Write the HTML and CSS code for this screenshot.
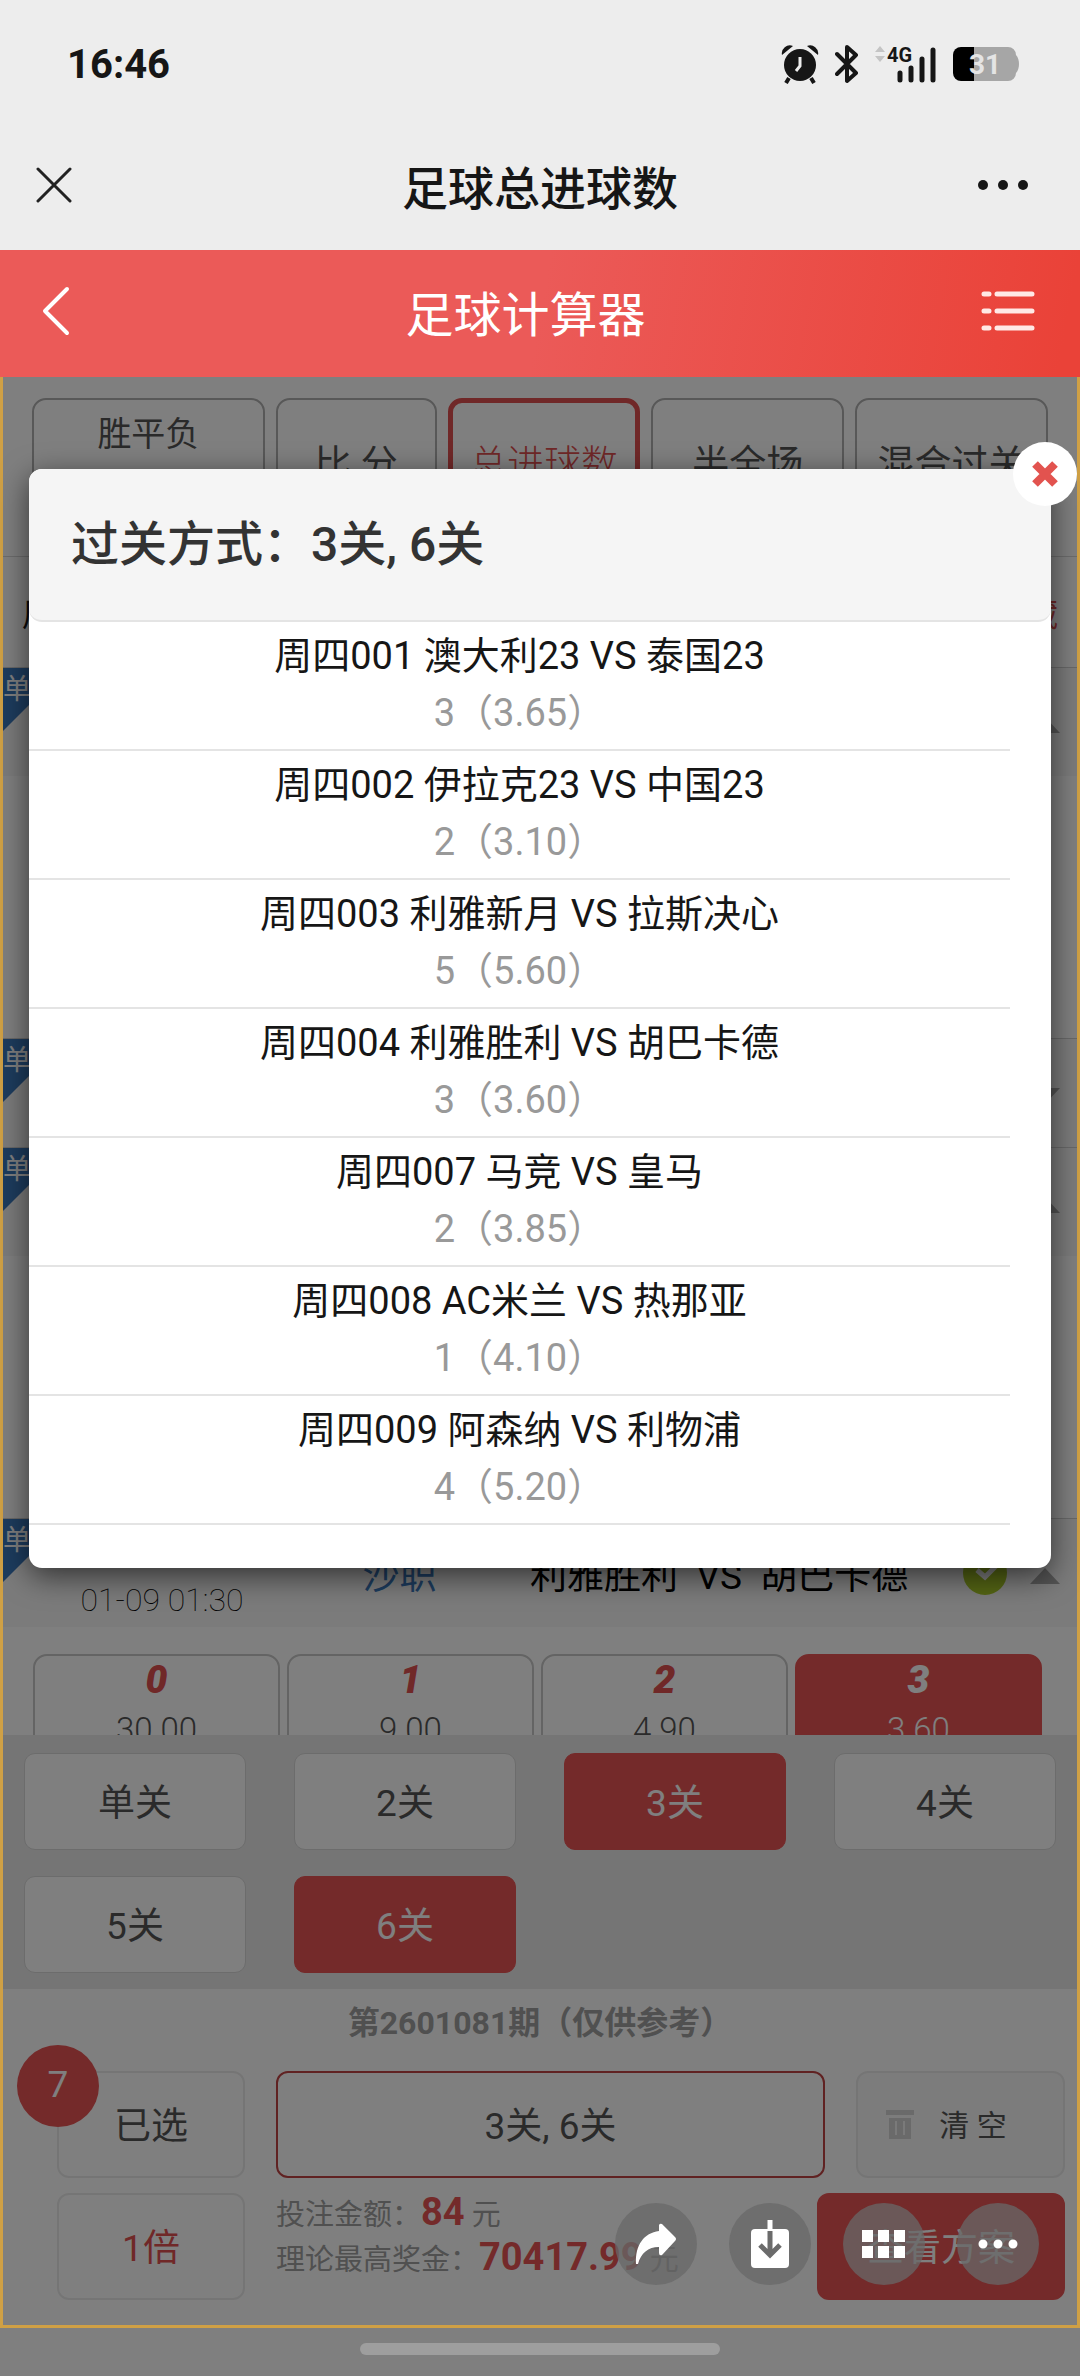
FILE: index.html
```html
<!DOCTYPE html>
<html lang="zh-CN">

<head>
    <meta charset="UTF-8">
    <meta name="viewport" content="width=device-width, initial-scale=1.0">
    <title>足球总进球数</title>
    <link rel="stylesheet" href="styles.css">
</head>

<body>
    <div class="status-bar">
        <span class="time">16:46</span>
        <div class="status-icons">
            <svg width="38" height="40" viewBox="0 0 38 40">
                <path d="M1 11a8 8 0 0 1 11-9zM37 11a8 8 0 0 0-11-9z" fill="#161616"/>
                <path d="M8 34l-3 5M30 34l3 5" stroke="#161616" stroke-width="4"/>
                <circle cx="19" cy="21" r="16" fill="#161616"/>
                <path d="M19 13v9l-4 5" fill="none" stroke="#ededed" stroke-width="3"/>
            </svg>
            <svg width="24" height="40" viewBox="0 0 24 40">
                <path d="M2 10l19 19-9 8V3l9 8L2 30" fill="none" stroke="#161616" stroke-width="4" stroke-linejoin="round" stroke-linecap="round"/>
            </svg>
            <svg width="62" height="40" viewBox="0 0 62 40">
                <path d="M0 8l5-6 5 6zM0 12l5 6 5-6z" fill="#c4c4c4"/>
                <text x="12" y="18" class="net">4G</text>
                <path d="M25 29v7M36 24v12M47 15v21M58 6v30" stroke="#161616" stroke-width="5" stroke-linecap="round"/>
            </svg>
            <svg width="67" height="40" viewBox="0 0 67 40">
                <path d="M21 3h34a8 8 0 0 1 8 8c4 4 4 14 0 18a8 8 0 0 1-8 8H21z" fill="#a6a6a6"/>
                <path d="M21 3H8a8 8 0 0 0-8 8v18a8 8 0 0 0 8 8h13z" fill="#000"/>
                <text x="32" y="30" text-anchor="middle" class="charge">31</text>
            </svg>
        </div>
    </div>

    <div class="nav-bar">
        <button class="icon-button" aria-label="关闭">
            <svg width="36" height="38" viewBox="0 0 36 38">
                <path d="M2 3l32 32M34 3L2 35" stroke="#222" stroke-width="3" stroke-linecap="round"/>
            </svg>
        </button>
        <h1>足球总进球数</h1>
        <button class="icon-button" aria-label="更多">
            <svg width="50" height="10" viewBox="0 0 50 10">
                <circle cx="5" cy="5" r="5" fill="#161616"/>
                <circle cx="25" cy="5" r="5" fill="#161616"/>
                <circle cx="45" cy="5" r="5" fill="#161616"/>
            </svg>
        </button>
    </div>

    <header class="header">
        <button class="icon-button" aria-label="返回">
            <svg width="28" height="50" viewBox="0 0 28 50">
                <path d="M25 3L3 25l22 22" fill="none" stroke="#fff" stroke-width="4" stroke-linecap="round" stroke-linejoin="round"/>
            </svg>
        </button>
        <h2>足球计算器</h2>
        <button class="icon-button" aria-label="菜单">
            <svg width="54" height="42" viewBox="0 0 54 42">
                <path d="M3 4h5M16 4h35M3 21h5M16 21h35M3 38h5M16 38h35" stroke="#ffe9e6" stroke-width="5" stroke-linecap="round"/>
            </svg>
        </button>
    </header>

    <main class="calculator">
        <div class="bets">
            <div class="tabs">
                <button class="tab tab-top">胜平负</button>
                <button class="tab">比 分</button>
                <button class="tab active">总进球数</button>
                <button class="tab">半全场</button>
                <button class="tab">混合过关</button>
            </div>

            <div class="day">
                <span>周四</span>
                <button class="hide">隐藏</button>
            </div>

            <div class="match">
                <span class="single">单</span>
                <svg class="arrow" width="30" height="16"><path d="M15 0l15 16H0z"/></svg>
            </div>
            <div class="options"></div>

            <div class="match">
                <span class="single">单</span>
                <svg class="arrow" width="30" height="16"><path d="M0 0h30L15 16z"/></svg>
            </div>

            <div class="match">
                <span class="single">单</span>
                <svg class="arrow" width="30" height="16"><path d="M15 0l15 16H0z"/></svg>
            </div>
            <div class="options"></div>

            <div class="match">
                <span class="single">单</span>
                <div class="match-time">周四004<br>01-09 01:30</div>
                <div class="league">沙职</div>
                <div class="teams">利雅胜利 &nbsp;VS&nbsp; 胡巴卡德</div>
                <svg class="check" width="44" height="44" viewBox="0 0 44 44">
                    <circle cx="22" cy="22" r="22" fill="#a8c828"/>
                    <path d="M14 19l8 7 12-12" fill="none" stroke="#fff" stroke-width="5"/>
                </svg>
                <svg class="arrow" width="30" height="16"><path d="M15 0l15 16H0z"/></svg>
            </div>
            <div class="options">
                <button class="option"><b>0</b>30.00</button>
                <button class="option"><b>1</b>9.00</button>
                <button class="option"><b>2</b>4.90</button>
                <button class="option active"><b>3</b>3.60</button>
            </div>
        </div>

        <div class="passes">
            <button class="pass">单关</button>
            <button class="pass">2关</button>
            <button class="pass active">3关</button>
            <button class="pass">4关</button>
            <button class="pass">5关</button>
            <button class="pass active">6关</button>
        </div>

        <div class="summary">
            <p class="issue">第2601081期（仅供参考）</p>
            <div class="summary-row">
                <button class="box selected">已选<span class="count">7</span></button>
                <button class="box chosen">3关, 6关</button>
                <button class="box clear">
                    <svg width="28" height="32" viewBox="0 0 28 32">
                        <path d="M0 3h28v5H0zM3 11h22v21H3z" fill="#d4d4d4"/>
                        <path d="M10 14v14M18 14v14" stroke="#f4f4f4" stroke-width="2"/>
                    </svg>
                    清 空
                </button>
            </div>
            <div class="summary-row">
                <button class="box times">1倍</button>
                <div class="money">
                    <p>投注金额：<b>84</b> 元</p>
                    <p>理论最高奖金：<b>70417.99</b> 元</p>
                </div>
                <button class="box plan">查看方案</button>
            </div>
        </div>

        <div class="mask"></div>
        <div class="frame"></div>

        <section class="modal">
            <h3>过关方式：3关, 6关</h3>
            <button class="modal-close" aria-label="关闭">
                <svg width="28" height="28" viewBox="0 0 28 28">
                    <path d="M4 4l20 20M24 4L4 24" stroke="#e2534f" stroke-width="8"/>
                </svg>
            </button>
            <ul class="picks">
                <li>周四001 澳大利23 VS 泰国23<span>3（3.65）</span></li>
                <li>周四002 伊拉克23 VS 中国23<span>2（3.10）</span></li>
                <li>周四003 利雅新月 VS 拉斯决心<span>5（5.60）</span></li>
                <li>周四004 利雅胜利 VS 胡巴卡德<span>3（3.60）</span></li>
                <li>周四007 马竞 VS 皇马<span>2（3.85）</span></li>
                <li>周四008 AC米兰 VS 热那亚<span>1（4.10）</span></li>
                <li>周四009 阿森纳 VS 利物浦<span>4（5.20）</span></li>
            </ul>
        </section>

        <div class="tools">
            <button class="tool" aria-label="分享">
                <svg width="42" height="42" viewBox="0 0 42 42">
                    <path d="M24 2q1-2 3-1l13 13q2 2 0 4L27 32q-3 1-3-2v-6C13 24 6 30 3 41H1C0 22 9 10 24 8z" fill="#fff"/>
                </svg>
            </button>
            <button class="tool" aria-label="下载">
                <svg width="40" height="48" viewBox="0 0 40 48">
                    <rect x="1" y="9" width="38" height="39" rx="4" fill="#fff"/>
                    <path d="M20 0v10" stroke="#fff" stroke-width="5"/>
                    <path d="M20 11v23M10 25l10 10 10-10" fill="none" stroke="#6b6b6b" stroke-width="5"/>
                </svg>
            </button>
            <button class="tool" aria-label="应用">
                <svg width="44" height="28" viewBox="0 0 44 28">
                    <path d="M0 0h11v12H0zM16 0h11v12H16zM32 0h11v12H32zM0 16h11v12H0zM16 16h11v12H16zM32 16h11v12H32z" fill="#fff"/>
                </svg>
            </button>
            <button class="tool" aria-label="更多">
                <svg width="40" height="10" viewBox="0 0 40 10">
                    <path d="M5 5h0M20 5h0M35 5h0" stroke="#fff" stroke-width="9" stroke-linecap="round"/>
                </svg>
            </button>
        </div>
    </main>

    <div class="home-bar"><span></span></div>
</body>

</html>
```
FILE: styles.css
```css
* {
    box-sizing: border-box;
}

body {
    font-family: Roboto, 'Noto Sans CJK SC', sans-serif;
    margin: 0;
    background-color: #ededed;
    display: flex;
    flex-direction: column;
    height: 100vh;
    font-size: 37px;
    color: #161616;
}

h1, h2, h3, p, ul {
    margin: 0;
    padding: 0;
}

button {
    font: inherit;
    color: #555;
    background-color: #fff;
    border: none;
    padding: 0;
    cursor: pointer;
}

svg {
    display: block;
}

.icon-button {
    background: none;
}

/* Phone status bar */
.status-bar {
    height: 128px;
    padding: 0 60px 0 67px;
    display: flex;
    justify-content: space-between;
    align-items: center;
}

.time {
    font-size: 40px;
    font-weight: 700;
}

.status-icons {
    display: flex;
    align-items: center;
    gap: 16px;
}

.net {
    font-size: 20px;
    font-weight: 700;
    fill: #161616;
}

.charge {
    font-size: 28px;
    font-weight: 700;
    fill: #e4e4e4;
}

.nav-bar {
    height: 122px;
    padding: 0 36px 8px;
    display: flex;
    justify-content: space-between;
    align-items: center;
}

.nav-bar h1 {
    font-size: 46px;
    font-weight: 500;
}

.nav-bar .icon-button {
    width: 66px;
}

.header {
    height: 127px;
    padding: 0 45px 6px 42px;
    display: flex;
    justify-content: space-between;
    align-items: center;
    background: linear-gradient(100deg, #eb5a58 50%, #ea4238 98%);
    color: #fff;
}

.header h2 {
    font-size: 48px;
    font-weight: 400;
}

/* Calculator page */
.calculator {
    position: relative;
    flex: 1;
    min-height: 0;
    display: flex;
    flex-direction: column;
    background-color: #fff;
}

.bets {
    flex: 1;
    min-height: 0;
    overflow: hidden;
}

.tabs {
    display: grid;
    grid-template-columns: 233fr 161fr 193fr 193fr 193fr;
    gap: 11px;
    padding: 21px 32px 32px;
    border-bottom: 1px solid #d8d8d8;
}

.tab {
    height: 126px;
    border: 2px solid #b0b0b0;
    border-radius: 14px;
    white-space: nowrap;
}

.tab-top {
    font-size: 34px;
    padding-bottom: 60px;
}

.tab.active {
    border: 5px solid #e05050;
    color: #e05050;
    font-weight: 300;
}

.day {
    display: flex;
    justify-content: space-between;
    align-items: center;
    height: 110px;
    padding: 0 22px;
    font-size: 32px;
}

.hide {
    color: #e05050;
}

.match {
    position: relative;
    display: flex;
    align-items: center;
    height: 109px;
    border-top: 1px solid #d0d0d0;
    background-color: #f7f7f7;
    color: #000;
}

.single {
    position: absolute;
    left: 0;
    top: 0;
    width: 66px;
    height: 66px;
    padding-left: 3px;
    clip-path: polygon(0 0, 100% 0, 0 100%);
    background-color: #3a78bc;
    color: #fff;
    font-size: 28px;
    line-height: 44px;
}

.match-time {
    width: 30%;
    text-align: center;
    font-size: 32px;
    font-weight: 100;
    line-height: 55px;
}

.league {
    width: 14%;
    text-align: center;
    color: #3a78bc;
}

.teams {
    flex: 1;
    text-align: center;
}

.check {
    margin-right: 73px;
}

.arrow {
    position: absolute;
    right: 20px;
    top: 49px;
    fill: #a8a8a8;
}

.options {
    display: grid;
    grid-template-columns: repeat(4, 1fr);
    align-content: start;
    gap: 7px;
    height: 262px;
    padding: 27px 38px 27px 33px;
}

.option {
    height: 101px;
    border: 2px solid #c8c8c8;
    border-radius: 14px;
    font-size: 33px;
    font-weight: 300;
    line-height: 49px;
}

.option b {
    display: block;
    font-size: 39px;
    font-weight: 900;
    font-style: italic;
    color: #e05050;
}

.option.active,
.pass.active {
    border-color: #e85454;
    background-color: #e85454;
    color: #fff;
}

.option.active b {
    color: #fff;
}

.passes {
    display: grid;
    grid-template-columns: repeat(4, 1fr);
    gap: 26px 48px;
    padding: 18px 24px 16px;
    background-color: #ebebeb;
}

.pass {
    height: 97px;
    padding-bottom: 4px;
    border: 1px solid #d8d8d8;
    border-radius: 11px;
}

/* Bottom summary */
.summary {
    padding: 0 15px 28px 57px;
}

.issue {
    margin: 0 42px 14px 0;
    text-align: center;
    font-size: 32px;
    font-weight: 700;
    line-height: 68px;
    color: #a0a0a0;
}

.summary-row {
    display: flex;
    gap: 31px;
}

.summary-row + .summary-row {
    margin-top: 15px;
}

.box {
    position: relative;
    height: 107px;
    padding-bottom: 4px;
    border: 2px solid #ebebeb;
    border-radius: 12px;
}

.selected,
.times {
    width: 188px;
}

.times {
    color: #e05050;
}

.count {
    position: absolute;
    left: -42px;
    top: -28px;
    width: 82px;
    height: 82px;
    border-radius: 50%;
    background-color: #e85454;
    color: #fff;
    line-height: 80px;
}

.chosen {
    flex: 1;
    border-color: #c04444;
}

.clear {
    width: 209px;
    display: flex;
    align-items: center;
    justify-content: center;
    gap: 25px;
    padding-right: 28px;
    background-color: #f8f8f8;
    font-size: 30px;
}

.money {
    flex: 1;
    font-size: 29px;
    line-height: 45px;
    white-space: nowrap;
    color: #a0a0a0;
}

.money p {
    height: 45px;
}

.money b {
    font-size: 38px;
    line-height: 38px;
    color: #e85454;
}

.plan {
    width: 248px;
    border-color: #e85454;
    background-color: #e85454;
    color: #fff;
}

.mask {
    position: absolute;
    inset: 0;
    background-color: rgba(0, 0, 0, 0.5);
}

.frame {
    position: absolute;
    inset: 0;
    border: 3px solid #cfa045;
    border-top: none;
}

/* Pass method dialog */
.modal {
    position: absolute;
    top: 92px;
    left: 29px;
    right: 29px;
    padding-bottom: 43px;
    border-radius: 13px;
    background-color: #fff;
    box-shadow: 0 8px 30px rgba(0, 0, 0, 0.6);
}

.modal h3 {
    height: 153px;
    padding-left: 42px;
    border-bottom: 2px solid #e4e4e4;
    border-radius: 13px;
    background-color: #f5f5f5;
    color: #333;
    font-size: 48px;
    font-weight: 500;
    line-height: 151px;
}

.modal-close {
    position: absolute;
    top: -27px;
    right: -26px;
    width: 64px;
    height: 64px;
    border-radius: 50%;
    display: flex;
    align-items: center;
    justify-content: center;
}

.picks {
    list-style: none;
    margin-right: 41px;
}

.picks li {
    height: 129px;
    padding-top: 6px;
    border-bottom: 2px solid #e4e4e4;
    text-align: center;
    font-size: 38px;
    line-height: 57px;
}

.picks span {
    display: block;
    color: #999;
}

/* Floating tools */
.tools {
    position: absolute;
    right: 41px;
    bottom: 43px;
    display: flex;
    gap: 32px;
}

.tool {
    width: 82px;
    height: 82px;
    border-radius: 50%;
    display: flex;
    align-items: center;
    justify-content: center;
    background-color: rgba(104, 104, 104, 0.75);
}

.home-bar {
    height: 48px;
    padding-top: 15px;
    background-color: #7f7f7f;
}

.home-bar span {
    display: block;
    width: 360px;
    height: 12px;
    margin: 0 auto;
    border-radius: 6px;
    background-color: #9e9e9e;
}
```
